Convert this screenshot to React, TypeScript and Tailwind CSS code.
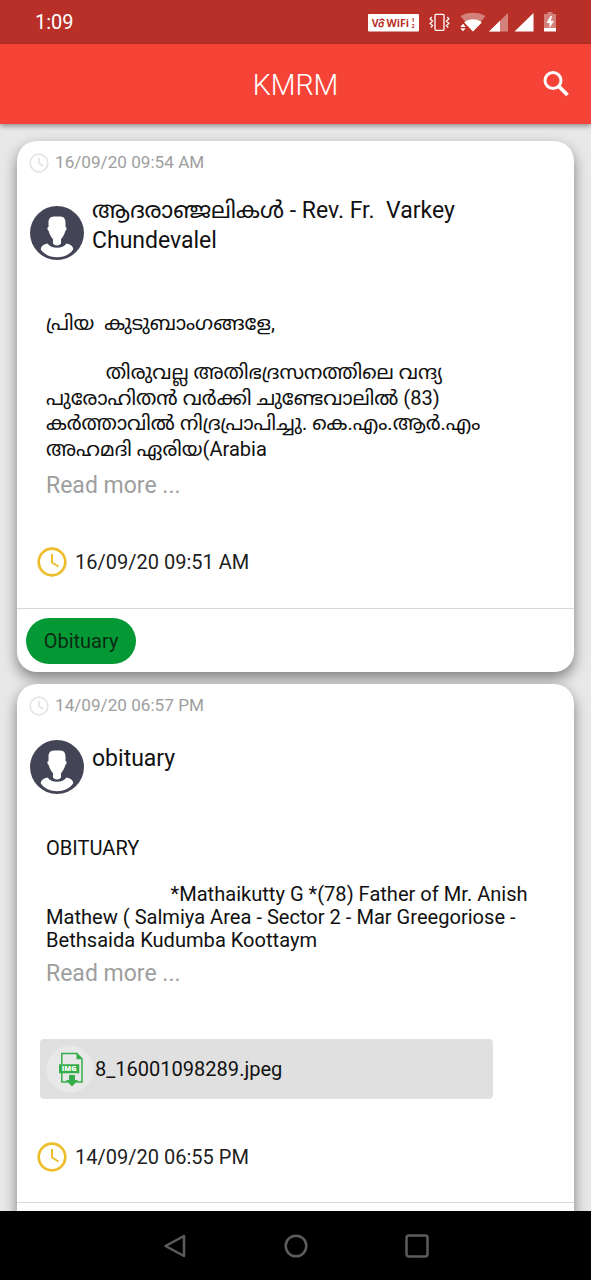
import type { ReactNode } from "react"

type Line = { text: string; className: string }

type Notice = {
  posted: string
  updated: string
  title: Line[]
  body: Line[]
  avatarClass: string
  titleClass: string
  bodyClass: string
  moreClass: string
  footerClass: string
  attachment?: string
  tag?: string
}

const notices: Notice[] = [
  {
    posted: "16/09/20 09:54 AM",
    updated: "16/09/20 09:51 AM",
    title: [
      { text: "ആദരാഞ്ജലികൾ - Rev. Fr.  Varkey", className: "h-[30px]" },
      { text: "Chundevalel", className: "h-[30px]" },
    ],
    body: [
      { text: "പ്രിയ  കുടുബാംഗങ്ങളേ,", className: "h-[26px]" },
      { text: "", className: "h-[23px]" },
      { text: "            തിരുവല്ല അതിഭദ്രസനത്തിലെ വന്ദ്യ", className: "h-[26px]" },
      { text: "പുരോഹിതൻ വർക്കി ചുണ്ടേവാലിൽ (83)", className: "h-[26px]" },
      { text: "കർത്താവിൽ നിദ്രപ്രാപിച്ചു. കെ.എം.ആർ.എം", className: "h-[25px]" },
      { text: "അഹമദി ഏരിയ(Arabia", className: "h-[26px]" },
    ],
    avatarClass: "pt-[11px]",
    titleClass: "h-[115px] pt-px",
    bodyClass: "h-[186px]",
    moreClass: "mt-[6px]",
    footerClass: "h-[112px] pt-[51px]",
    tag: "Obituary",
  },
  {
    posted: "14/09/20 06:57 PM",
    updated: "14/09/20 06:55 PM",
    title: [{ text: "obituary", className: "h-[30px]" }],
    body: [
      { text: "OBITUARY", className: "h-[23px]" },
      { text: "", className: "h-[23px]" },
      { text: "                         *Mathaikutty G *(78) Father of Mr. Anish", className: "h-[23px]" },
      { text: "Mathew ( Salmiya Area - Sector 2 - Mar Greegoriose -", className: "h-[23px]" },
      { text: "Bethsaida Kudumba Koottaym", className: "h-[23px]" },
    ],
    avatarClass: "pt-[2px]",
    titleClass: "h-[99px] pt-[6px]",
    bodyClass: "h-[202px]",
    moreClass: "mt-[4px]",
    footerClass: "h-[103px] pt-[43px]",
    attachment: "8_16001098289.jpeg",
  },
]

function Clock({ className, thin }: { className: string; thin?: boolean }) {
  return (
    <svg viewBox="0 0 30 30" className={className} fill="none" stroke="currentColor">
      <circle cx="15" cy="15" r="13.3" strokeWidth={thin ? 2.5 : 2.7} />
      <path d="M15 7v8.500l6.500 4" strokeWidth={thin ? 2.5 : 2} />
    </svg>
  )
}

function Avatar() {
  return (
    <svg viewBox="0 0 54 54" className="h-[54px] w-[54px] shrink-0">
      <circle cx="27" cy="27" r="27" fill="#434557" />
      <path
        fill="#fff"
        d="M24 10.500h6.500c3.500.3 5 2.500 5 6v4.500c1.500.3 1.500 2.800-.2 4-.8 3.500-2.400 5.800-4.300 8.200V37.500c-1.500 2.500-6.500 2.500-8 0v-4.300c-1.900-2.400-3.500-4.700-4.300-8.200-1.700-1.200-1.700-3.700-.2-4v-4.500c0-3.500 1.500-5.700 5.500-6z"
      />
      <path
        fill="#fff"
        d="M17.500 37.600c3.400 5.600 15.600 5.600 19 0 4 .8 6.500 2.600 6.800 5.700-3.200 5.300-9.800 8-16.300 8s-13.100-2.700-16.300-8c.3-3.100 2.800-4.900 6.800-5.700z"
      />
    </svg>
  )
}

function ImageFile() {
  return (
    <svg viewBox="0 0 48 48" className="h-12 w-12">
      <circle cx="24" cy="24" r="23.500" fill="#e8e8e8" />
      <path d="M15.800 19.500V8.500h15l5.200 5.500v23h-6M15.800 27.500V37h6" fill="none" stroke="#35ad4a" strokeWidth="1.500" />
      <path d="M30.500 7.800v6.500h6.300z" fill="#35ad4a" />
      <path d="M13 19.200h20.300v9H13zM23 30h6v5h3.200L26 41.500 19.800 35H23z" fill="#35ad4a" />
      <text x="23.200" y="26.300" textAnchor="middle" fill="#fff" fontSize="7.200" fontWeight="800" fontFamily="Open Sans, sans-serif">
        IMG
      </text>
    </svg>
  )
}

function StatusIcons() {
  return (
    <svg viewBox="0 0 200 44" className="h-11 w-[200px]">
      <rect x="7" y="14" width="51" height="17.500" rx="1" fill="#fff" />
      <g fill="#b93029" fontFamily="Open Sans, sans-serif" fontWeight="700">
        <text x="10.800" y="26.800" fontSize="10.500">V</text>
        <text x="25.500" y="26.800" fontSize="10.500" textLength="22.500" lengthAdjust="spacingAndGlyphs">WiFi</text>
        <text x="50.500" y="22" fontSize="5.500">1</text>
        <text x="50.500" y="27.500" fontSize="5.500">2</text>
      </g>
      <g fill="none" stroke="#b93029" strokeWidth="1.300">
        <circle cx="20" cy="24.700" r="2" />
        <path d="M18.500 20.500c2-2 4-1.500 5 .5M20 22.500c1-1 2.500-.5 2.500 1" />
      </g>
      {/* vibrate */}
      <g fill="none" stroke="#fff" strokeWidth="1.300">
        <rect x="74" y="14.300" width="9" height="16" rx="1" />
        <path d="M70.800 17l-1.700 2 2.500 2-2.500 2.500 2.500 2-1.800 2M86.200 17l1.700 2-2.500 2 2.500 2.500-2.500 2 1.800 2" strokeWidth="1.200" />
      </g>
      {/* wifi */}
      <path d="M112 31.500L99.500 16c7-4.500 18-4.500 25 0z" fill="#d4817c" />
      <path d="M112 31.500l-8.800-9c4.500-4.300 13-4.300 17.600 0z" fill="#fff" />
      <path d="M99.300 27l2.700-3.200 2.700 3.200zM99.300 28.300h5.400L102 31.300z" fill="#fff" />
      {/* signal */}
      <path d="M128 31.500L147 13v18.500z" fill="#d4817c" />
      <path d="M128 31.500L139 20.800v10.700zM153.500 31.500L172.500 13v18.500z" fill="#fff" />
      {/* battery */}
      <path d="M183 14h3.500v-2h5v2h3.500v14h-12z" fill="#d4817c" />
      <path d="M183 28h12v3.500h-12z" fill="#fff" />
      <path d="M189.500 16l-4 7h3v5l4.500-7h-3.200l1.200-5z" fill="#fff" />
    </svg>
  )
}

function Row({ className, children }: { className: string; children?: ReactNode }) {
  return <div className={`flex items-center whitespace-pre ${className}`}>{children}</div>
}

function NoticeCard({ notice }: { notice: Notice }) {
  return (
    <article className="shrink-0 rounded-[20px] bg-white shadow-[0_6px_14px_rgba(0,0,0,0.46)]">
      <Row className="h-[43px] gap-[6px] pl-3 text-[17.150px] text-[#9e9e9e]">
        <Clock className="h-5 w-5 text-[#e4e4e4]" thin />
        {notice.posted}
      </Row>

      <div className="flex pl-[13px] pt-[11px]">
        <div className={notice.avatarClass}>
          <Avatar />
        </div>
        <div className={`pl-[8px] text-[23px] ${notice.titleClass}`}>
          {notice.title.map((line) => (
            <Row key={line.text} className={line.className}>{line.text}</Row>
          ))}
        </div>
      </div>

      <div className={`pl-[29px] text-[20.080px] ${notice.bodyClass}`}>
        {notice.body.map((line, i) => (
          <Row key={i} className={line.className}>{line.text}</Row>
        ))}
        <Row className={`h-[36px] text-[23px] text-[#9e9e9e] ${notice.moreClass}`}>Read more ...</Row>
      </div>

      {notice.attachment && (
        <Row className="ml-[23px] h-[60px] w-[453px] gap-px rounded-[4px] bg-[#e0e0e0] pl-[6px] text-[20.050px]">
          <ImageFile />
          {notice.attachment}
        </Row>
      )}

      <div className={notice.footerClass}>
        <Row className="h-[30px] gap-[8px] pl-[20px] text-[20.030px] text-[#212121]">
          <Clock className="h-[30px] w-[30px] text-[#edbd2c]" />
          {notice.updated}
        </Row>
      </div>
      <Row className="h-[64px] border-t border-[#d9d9d9] pl-[9px]">
        {notice.tag && (
          <span className="flex h-[46px] w-[110px] items-center justify-center rounded-full bg-[#049934] text-[20px] text-[#0a2b13]">
            {notice.tag}
          </span>
        )}
      </Row>
    </article>
  )
}

export default function App() {
  return (
    <div className="flex h-[1280px] w-[591px] flex-col overflow-hidden bg-[#e8e8e8] font-[Roboto,'Noto_Sans_Malayalam',sans-serif] text-[#111]">
      <div className="flex h-11 shrink-0 items-center justify-between bg-[#b93029] pl-[35px] pr-[30px] text-white">
        <span className="text-[20px]">1:09</span>
        <StatusIcons />
      </div>

      <header className="relative z-10 grid h-20 shrink-0 grid-cols-[1fr_auto_1fr] items-center bg-[#f64338] text-white shadow-[0_2px_5px_rgba(0,0,0,0.4)]">
        <h1 className="col-start-2 pt-[3px] text-[28.600px] font-light">KMRM</h1>
        <svg viewBox="0 0 28 28" className="mr-[21px] h-7 w-7 justify-self-end" fill="none" stroke="#fff">
          <circle cx="11" cy="10.500" r="8" strokeWidth="3" />
          <path d="M16.500 16l9 9" strokeWidth="3.800" />
        </svg>
      </header>

      <main className="flex min-h-0 flex-1 flex-col gap-[12px] overflow-hidden px-[17px] pt-[17px]">
        {notices.map((notice) => (
          <NoticeCard key={notice.posted} notice={notice} />
        ))}
      </main>

      <nav className="flex h-[69px] shrink-0 items-center justify-center gap-[97px] bg-black text-[#5c5c5c]">
        <svg viewBox="0 0 24 24" className="h-6 w-6" fill="none" stroke="currentColor" strokeWidth="2.500" strokeLinejoin="round">
          <path d="M21 2v20L2.500 12z" />
        </svg>
        <svg viewBox="0 0 24 24" className="h-6 w-6" fill="none" stroke="currentColor" strokeWidth="2.500">
          <circle cx="12" cy="12" r="10.300" />
        </svg>
        <svg viewBox="0 0 24 24" className="h-6 w-6" fill="none" stroke="currentColor" strokeWidth="2.500">
          <rect x="1.500" y="1.500" width="21" height="21" rx="2.500" />
        </svg>
      </nav>
    </div>
  )
}
